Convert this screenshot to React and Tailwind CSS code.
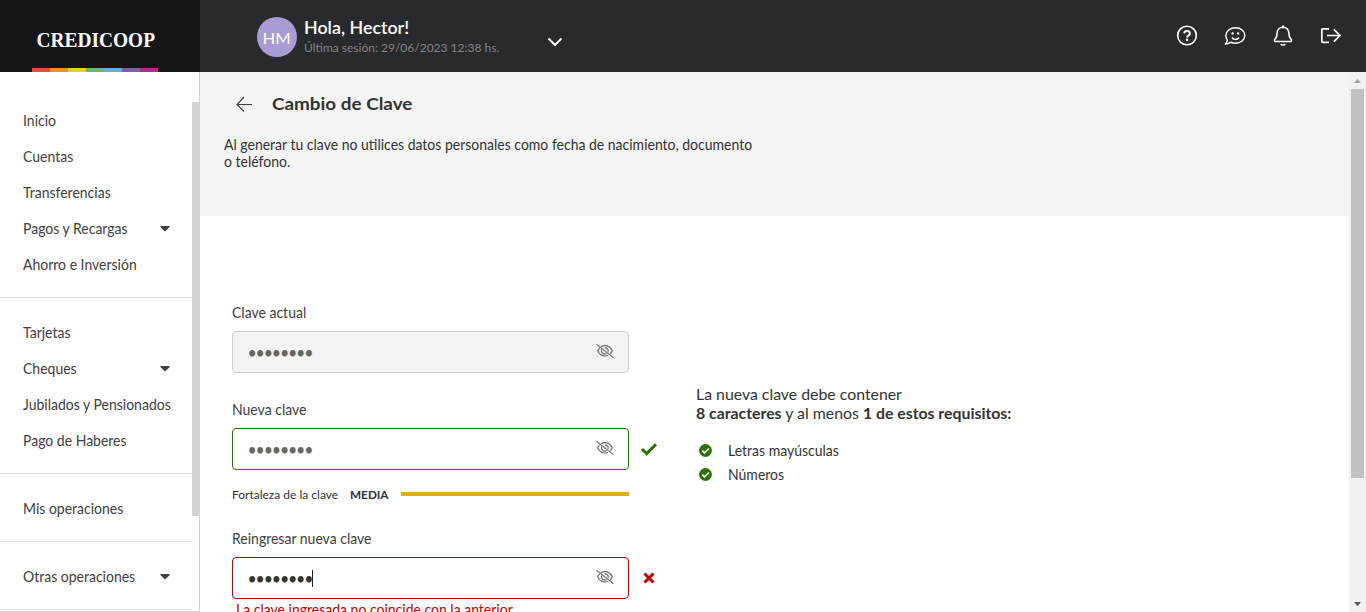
import React from "react";

const groups = [
  [["Inicio"], ["Cuentas"], ["Transferencias"], ["Pagos y Recargas", true], ["Ahorro e Inversión"]],
  [["Tarjetas"], ["Cheques", true], ["Jubilados y Pensionados"], ["Pago de Haberes"]],
  [["Mis operaciones"]],
  [["Otras operaciones", true]],
];

const stripes = ["bg-[#dd5139]", "bg-[#e59235]", "bg-[#e3d02e]", "bg-[#68b778]", "bg-[#63aae8]", "bg-[#7a64a8]", "bg-[#b02e86]"];

function Caret() {
  return (
    <svg width="10" height="6" viewBox="0 0 10 6" className="shrink-0">
      <path d="M0.6 0H9.4Q10 .3 9.6 .9L5.6 5Q5 5.6 4.4 5L.4 .9Q0 .3 .6 0Z" fill="#414042" />
    </svg>
  );
}

function EyeOff() {
  return (
    <svg width="18" height="14" viewBox="0 0 18 14" fill="none" stroke="#6b6b6e" strokeWidth="1.2" className="shrink-0">
      <path d="M5.2 2.6C6.3 2 7.6 1.6 9 1.6c3.3 0 6 2.3 7.3 5.2-.5 1.2-1.2 2.2-2.1 3M12 11.3c-.9.4-1.9.7-3 .7-3.3 0-6-2.3-7.3-5.2.5-1.1 1.2-2.1 2.1-2.9" />
      <path d="M5.7 5.4C4.8 7.8 6.3 10 8.8 10.1c.6 0 1.2-.2 1.7-.5M8.6 4C10.9 3.7 12.7 5.5 12.1 8" />
      <path d="M.5.4l17 13.2" />
    </svg>
  );
}

function Field({ label, frame, dots, caret, mark }) {
  return (
    <div>
      <div className="flex h-[17px] items-center text-[14px] text-[#414042]"><span className="-mt-[3px] origin-center scale-y-[1.1]">{label}</span></div>
      <div className="mt-[10px] flex items-center">
        <div className={"flex h-[42px] w-[397px] items-center justify-between rounded border pr-[14px] pl-[15px] " + frame}>
          <div className={"flex items-center text-[16px] tracking-[-1.18px] " + dots}>
            <span className="-mt-px -ml-[0.5px] scale-y-[1.1] leading-[20px]">••••••••</span>
            {caret && <span className="h-[17px] w-px bg-[#222]" />}
          </div>
          <div className="pb-[3px]"><EyeOff /></div>
        </div>
        {mark}
      </div>
    </div>
  );
}

function Requirement({ children }) {
  return (
    <li className="flex h-6 items-center">
      <svg width="13" height="13" viewBox="0 0 13 13" className="mr-4">
        <circle cx="6.5" cy="6.5" r="6.4" fill="#2e7103" />
        <path d="M3.2 6.7l2.3 2.2 4.3-4.4" fill="none" stroke="#fff" strokeWidth="1.7" />
      </svg>
      <span className="-mt-[2px] scale-y-[1.1]">{children}</span>
    </li>
  );
}

export default function App() {
  return (
    <div className="flex h-[612px] w-[1366px] flex-col overflow-hidden bg-white font-['Lato','Liberation_Sans',sans-serif] text-[14px] text-[#333]">
      <header className="flex h-[72px] shrink-0 bg-[#292a2d]">
        <div className="flex w-[200px] flex-col justify-between bg-[#15161a] pl-8">
          <div className="mt-[22px] ml-[4px] h-[36px]">
            <svg width="130" height="36" viewBox="0 0 130 36">
              <text x="0.5" y="25.3" textLength="118.5" lengthAdjust="spacingAndGlyphs" fill="#fff" fontFamily="'Liberation Serif','Noto Serif',serif" fontWeight="700" fontSize="22">CREDICOOP</text>
            </svg>
          </div>
          <div className="flex h-1">
            {stripes.map((c) => <i key={c} className={"h-1 w-[18px] " + c} />)}
          </div>
        </div>
        <div className="ml-[57px] flex items-center">
          <div className="mt-[2px] flex h-10 w-10 items-center justify-center rounded-full bg-[#a99cd4] pt-[2px] text-[16px] text-white"><span className="scale-x-[1.04]">HM</span></div>
          <div className="mt-px ml-[7px] w-[243px]">
            <div className="h-[20px] origin-left scale-x-[1.05] pt-px text-[17px] leading-[20px] font-semibold text-white">Hola, Hector!</div>
            <div className="mt-px h-[18px] pt-px text-[12px] leading-[18px] text-[#858585]">Última sesión: 29/06/2023 12:38 hs.</div>
          </div>
          <svg width="16" height="10" viewBox="0 0 16 10" className="mt-[12px]"><path d="M1.5 1.5L8 8l6.5-6.5" fill="none" stroke="#fff" strokeWidth="2" /></svg>
        </div>
        <div className="mr-[23px] ml-auto flex items-center gap-[26px] text-white">
          <svg width="22" height="22" viewBox="0 0 22 22" fill="none" stroke="currentColor" strokeWidth="1.6" className="translate-x-px">
            <circle cx="11" cy="10.5" r="9.3" />
            <path d="M8.2 8.3C8.4 6.7 9.5 6 11 6c1.7 0 2.9 1 2.9 2.4 0 2-2.8 2-2.8 4" strokeWidth="1.9" />
            <circle cx="11.1" cy="14.9" r=".5" />
          </svg>
          <svg width="22" height="22" viewBox="0 0 22 22" fill="none" stroke="currentColor" strokeWidth="1.5" strokeLinejoin="round" className="translate-x-px">
            <path d="M11.5 2.8c5.3 0 9.3 3.4 9.3 7.7s-4 7.7-9.3 7.7c-1.7 0-3.2-.4-4.5-1C5.4 18.5 3.4 19.1 1.4 19.1c1-1.1 1.7-2.5 1.9-4C2.4 13.8 1.9 12.2 1.9 10.5c0-4.3 4.2-7.7 9.6-7.7z" />
            <path d="M8 12.5c1.6 2.6 5.3 2.6 6.9 0" />
            <g fill="currentColor" stroke="none"><circle cx="8.6" cy="8.4" r="1.2" /><circle cx="14" cy="8.4" r="1.2" /></g>
          </svg>
          <svg width="22" height="22" viewBox="0 0 22 22" fill="none" stroke="currentColor" strokeWidth="1.6" strokeLinejoin="round" className="translate-x-px">
            <path d="M11 .3v2M11 2.3c-3.6 0-5.9 2.6-5.9 6 0 4.2-1.1 5-2.3 6.3-.7.9-.2 1.9.8 1.9h14.8c1 0 1.5-1 .8-1.9-1.2-1.3-2.3-2.1-2.3-6.3 0-3.4-2.3-6-5.9-6zM9 18.8c.3 1.6 3.7 1.6 4 0" />
          </svg>
          <svg width="24" height="22" viewBox="0 0 24 22" fill="none" stroke="currentColor" strokeWidth="1.7">
            <path d="M10 3.8H4Q2.8 3.8 2.8 5v11.2Q2.8 17.4 4 17.4h6M8 10.5h13M14.8 4.3L21 10.5l-6.2 6.2" />
          </svg>
        </div>
      </header>

      <div className="flex min-h-0 flex-1">
        <nav className="flex w-[200px] shrink-0 border-r border-b border-[#d4d4d4]">
          <div className="w-[192px] shrink-0 pt-[31px] text-[#414042]">
            {groups.map((g, i) => (
              <ul key={i} className="mb-[17px] border-b border-[#e2e2e2] pb-[14px]">
                {g.map(([name, more]) => (
                  <li key={name} className="flex h-9 items-center justify-between pr-[22px] pl-[23px] whitespace-nowrap">
                    <span className="-mt-[3px] scale-y-[1.1]">{name}</span>{more && <Caret />}
                  </li>
                ))}
              </ul>
            ))}
          </div>
          <div className="-mr-px mt-[30px] h-[414px] w-2 shrink-0 bg-[#d2d2d2]" />
        </nav>

        <main className="w-[1149px] overflow-hidden">
          <section className="h-36 bg-[#f4f4f4] pt-[20px] pl-6">
            <div className="flex h-6 items-center">
              <svg width="18" height="18" viewBox="0 0 18 18" className="ml-[11px]" fill="none" stroke="#414042" strokeWidth="1.2"><path d="M17 9.5H2M9 2L2 9.5l7 7" /></svg>
              <h1 className="ml-[19px] origin-left scale-x-[1.11] text-[17px] leading-6 font-bold">Cambio de Clave</h1>
            </div>
            <p className="mt-[19px] text-[14px] leading-[17px]">
              <span className="block scale-y-[1.1]">Al generar tu clave no utilices datos personales como fecha de nacimiento, documento</span>
              <span className="block scale-y-[1.1]">o teléfono.</span>
            </p>
          </section>
          <section className="flex pl-8">
            <div className="mt-[88px] w-[464px] shrink-0">
              <Field label="Clave actual" frame="border-[#d0d0d0] bg-[#f3f3f3]" dots="text-[#666]" />
              <div className="mt-[28px]">
                <Field label="Nueva clave" frame="border-[#237400]" dots="text-[#666]" mark={
                  <svg width="18" height="14" viewBox="0 0 18 14" className="ml-[11px]"><path d="M2 7l4.6 4.6L16 2.2" fill="none" stroke="#2e7103" strokeWidth="3" /></svg>} />
              </div>
              <div className="mt-[15px] flex h-[18px] w-[397px] items-center text-[12px]">
                <span className="pt-px">Fortaleza de la clave</span>
                <b className="ml-3 origin-left scale-x-[.98] pt-px">MEDIA</b>
                <span className="ml-auto h-1 w-[228px] bg-[#e0ac1b]" />
              </div>
              <div className="mt-[27px]">
                <Field label="Reingresar nueva clave" frame="border-[#bf0000]" dots="text-[#333]" caret mark={
                  <svg width="12" height="12" viewBox="0 0 12 12" className="ml-[14px]"><path d="M1.5 1.5l9 9M10.5 1.5l-9 9" fill="none" stroke="#bf0000" strokeWidth="3" /></svg>} />
              </div>
              <p className="mt-px ml-1 scale-y-[1.1] text-[14px] leading-[17px] text-[#bf0000]">La clave ingresada no coincide con la anterior.</p>
            </div>
            <div className="mt-[168px]">
              <p className="origin-left scale-x-[.99] text-[16px] leading-[19px]">La nueva clave debe contener<br /><b>8 caracteres</b> y al menos <b>1 de estos requisitos:</b></p>
              <ul className="mt-[16px] ml-[3px]">
                <Requirement>Letras mayúsculas</Requirement>
                <Requirement>Números</Requirement>
              </ul>
            </div>
          </section>
        </main>

        <div className="flex w-[17px] shrink-0 flex-col items-center bg-[#f1f1f1]">
          <svg width="17" height="17" viewBox="0 0 17 17"><path d="M5 11l3.5-4L12 11z" fill="#a3a3a3" /></svg>
          <div className="h-[389px] w-[13px] bg-[#c1c1c1]" />
          <svg width="17" height="17" viewBox="0 0 17 17" className="mt-auto"><path d="M5 7l3.5 4L12 7z" fill="#505050" /></svg>
        </div>
      </div>
    </div>
  );
}
